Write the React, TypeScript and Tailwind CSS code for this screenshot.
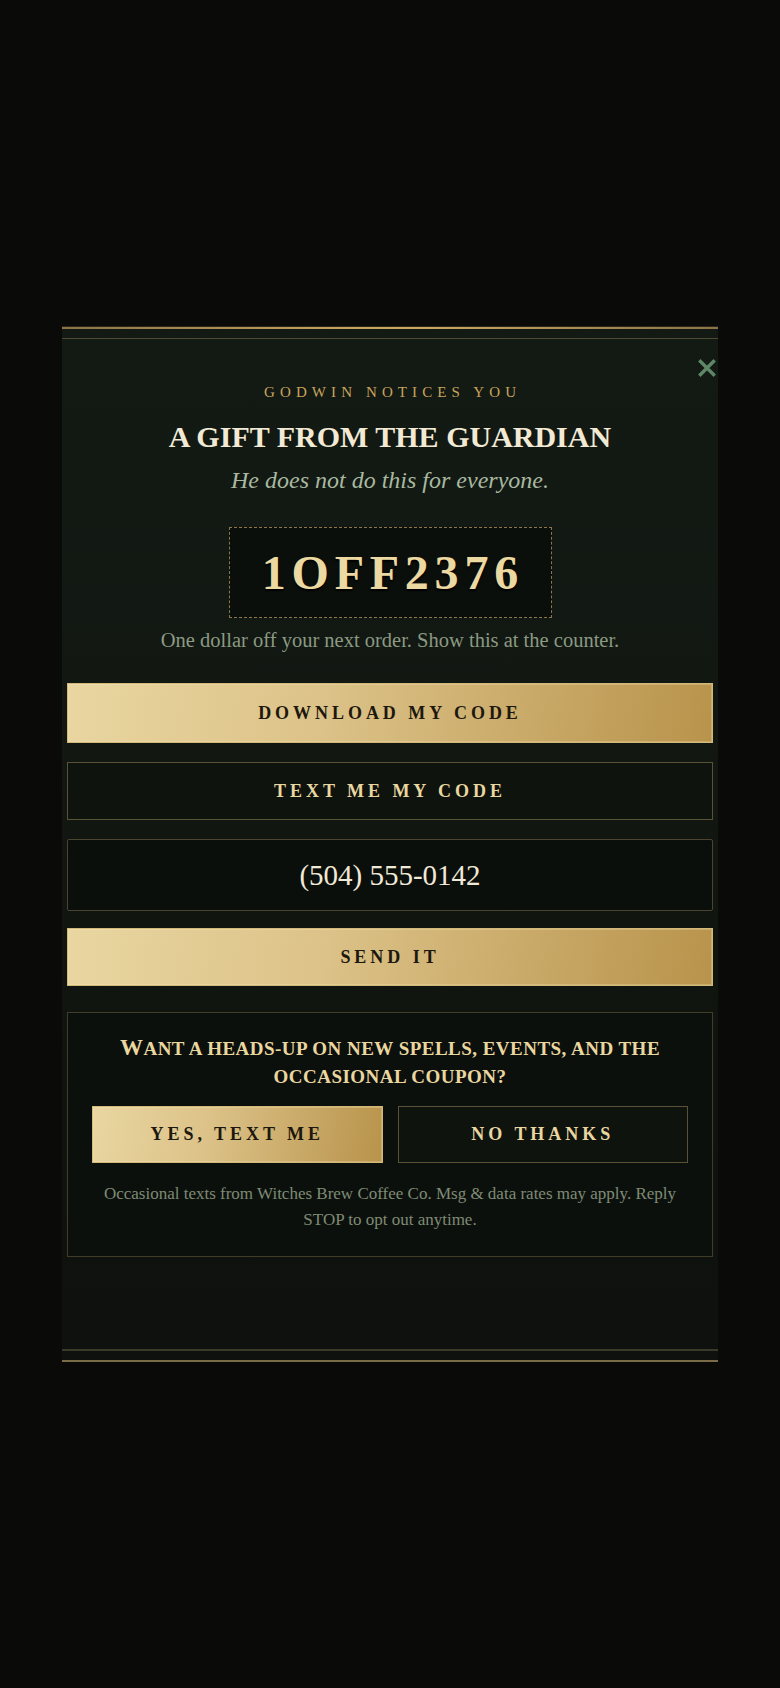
import React from "react";

const serif = "font-['Liberation_Serif','Times_New_Roman',serif]";

type BtnProps = { label: string; className?: string };

// gold gradient call-to-action
const GoldButton = ({ label, className = "" }: BtnProps) => (
  <button
    type="button"
    className={`flex items-center justify-center border border-[#d3b977] bg-[linear-gradient(100deg,#e9d6a1_0%,#dcc288_40%,#b8934b_100%)] text-[#1d180d] font-semibold uppercase tracking-[0.22em] shadow-[inset_0_0_0_1px_rgba(255,240,200,0.25)] ${className}`}
  >
    {label}
  </button>
);

// dark outlined secondary button
const OutlineButton = ({ label, className = "" }: BtnProps) => (
  <button
    type="button"
    className={`flex items-center justify-center border-[1.5px] border-[#5a5236] bg-[#0e130e] text-[#ead7a0] font-semibold uppercase tracking-[0.22em] ${className}`}
  >
    {label}
  </button>
);

const CloseIcon = () => (
  <svg width="18" height="18" viewBox="0 0 18 18" fill="none">
    <path d="M2.5 2.5 L15.5 15.5 M15.5 2.5 L2.5 15.5" stroke="#5d8766" strokeWidth="3.4" strokeLinecap="square" />
  </svg>
);

export default function App() {
  return (
    <div className={`min-h-screen bg-[#0a0a08] flex items-center justify-center ${serif}`}>
      <div className="relative w-[656px] bg-[linear-gradient(180deg,#131a14_0%,#111611_50%,#0e110d_100%)]">
        {/* top rules */}
        <div className="h-[1px] bg-[#2a2718]" />
        <div className="h-[2px] bg-[linear-gradient(90deg,#8a7447,#c7a55f_45%,#c9a862_55%,#8a7447)]" />
        <div className="h-[9px]" />
        <div className="h-[1px] bg-[#4e4b35]" />

        <button type="button" className="absolute right-[2px] top-[33px]">
          <CloseIcon />
        </button>

        <div className="flex flex-col items-center px-[5px] pt-[43px]">
          <p className="text-[15px] leading-[20px] tracking-[0.34em] pl-[0.34em] text-[#c9a55c] uppercase">
            Godwin notices you
          </p>
          <h1 className="mt-[17px] text-[30px] leading-[36px] font-bold uppercase text-[#f3ead5]">
            A gift from the Guardian
          </h1>
          <p className="mt-[10px] text-[24px] leading-[30px] italic text-[#a9b9a1]">
            He does not do this for everyone.
          </p>

          <div className="mt-[32px] w-[323px] h-[91px] flex items-center justify-center border border-dashed border-[#8c7547] bg-[#0b0f0b]">
            <span className="text-[48px] leading-none font-semibold tracking-[0.12em] pl-[0.12em] text-[#ecd8a1] [text-shadow:0_2px_2px_#000]">
              1OFF2376
            </span>
          </div>

          <p className="mt-[10px] text-[20.5px] leading-[24px] text-[#8b9a82]">
            One dollar off your next order. Show this at the counter.
          </p>

          <div className="mt-[31px] w-full flex flex-col">
            <GoldButton label="Download my code" className="h-[60px] text-[18px]" />
            <OutlineButton label="Text me my code" className="mt-[19px] h-[58px] text-[18px]" />
            <input
              type="tel"
              defaultValue="(504) 555-0142"
              className="mt-[19px] h-[72px] w-full rounded-[2px] border-[1.5px] border-[#4a4430] bg-[#0b0f0b] text-center text-[29px] text-[#f1e9d8] outline-none"
            />
            <GoldButton label="Send it" className="mt-[17px] h-[58px] text-[18px]" />

            {/* sms opt-in */}
            <div className="mt-[26px] border-[1.5px] border-[#423d29] bg-[#0c100c] px-[24px] pt-[21px] pb-[23px] flex flex-col items-center">
              <p className="text-center text-[19px] leading-[28px] font-bold uppercase text-[#ead7a0] tracking-[0.025em]">
                <span className="text-[23px]">W</span>ant a heads-up on new spells, events, and the occasional coupon?
              </p>
              <div className="mt-[15px] w-full grid grid-cols-2 gap-[15px]">
                <GoldButton label="Yes, text me" className="h-[57px] text-[18px]" />
                <OutlineButton label="No thanks" className="h-[57px] text-[18px] bg-[#0b0f0b]" />
              </div>
              <p className="mt-[18px] text-center text-[17px] leading-[26px] text-[#7e8b75]">
                Occasional texts from Witches Brew Coffee Co. Msg &amp; data rates may apply. Reply STOP to opt out anytime.
              </p>
            </div>
          </div>

          <div className="h-[92px]" />
        </div>

        {/* bottom rules */}
        <div className="h-[2px] bg-[#3b3927]" />
        <div className="h-[9px]" />
        <div className="h-[2px] bg-[#7b6c48]" />
      </div>
    </div>
  );
}
